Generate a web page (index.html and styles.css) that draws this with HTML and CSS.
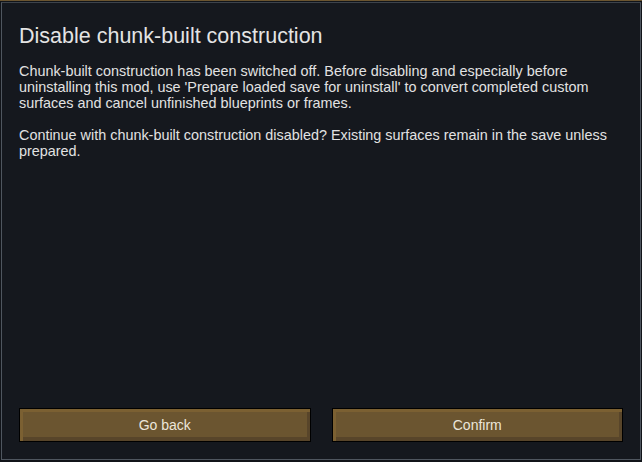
FILE: index.html
```html
<!DOCTYPE html>
<html>
<head>
<meta charset="utf-8">
<link rel="stylesheet" href="styles.css">
</head>
<body>
<div class="backdrop">
  <div class="dialog">
    <h1 class="title">Disable chunk-built construction</h1>
    <div class="content">
      <p>Chunk-built construction has been switched off. Before disabling and especially before uninstalling this mod, use 'Prepare loaded save for uninstall' to convert completed custom surfaces and cancel unfinished blueprints or frames.</p>
      <p>Continue with chunk-built construction disabled? Existing surfaces remain in the save unless prepared.</p>
    </div>
    <div class="actions">
      <button class="btn">Go back</button>
      <button class="btn">Confirm</button>
    </div>
  </div>
</div>
</body>
</html>
```
FILE: styles.css
```css
html, body {
  margin: 0;
  padding: 0;
  width: 642px;
  height: 462px;
  overflow: hidden;
  background: #111419;
}
.backdrop {
  width: 642px;
  height: 462px;
  box-sizing: border-box;
  padding: 1px 1px 2px 1px;
  border-top: 1px solid #6b5530;
  display: flex;
}
.dialog {
  flex: 1;
  box-sizing: border-box;
  border: 1px solid #4f565f;
  border-top-color: #3d434b;
  background: #15181e;
  display: flex;
  flex-direction: column;
  padding: 0 17px 17px 17px;
  font-family: "Liberation Sans", Arial, sans-serif;
  color: #e2e2e2;
}
.title {
  margin: 19px 0 0 0;
  font-size: 21.5px;
  font-weight: 400;
  line-height: 28px;
  color: #e4e4e4;
}
.content {
  flex: 1;
  margin-top: 13px;
  font-size: 14.4px;
  line-height: 16px;
  max-width: 590px;
}
.content p {
  margin: 0 0 16px 0;
}
.actions {
  display: flex;
  gap: 21px;
}
.btn {
  flex: 1;
  height: 34px;
  border: 1px solid #000;
  background: #6b5530;
  box-shadow: inset 3px 3px 0 #7b6032, inset -3px -4px 0 #58452a;
  font-family: "Liberation Sans", Arial, sans-serif;
  font-size: 14px;
  color: #ece6da;
  padding: 0;
}
```
